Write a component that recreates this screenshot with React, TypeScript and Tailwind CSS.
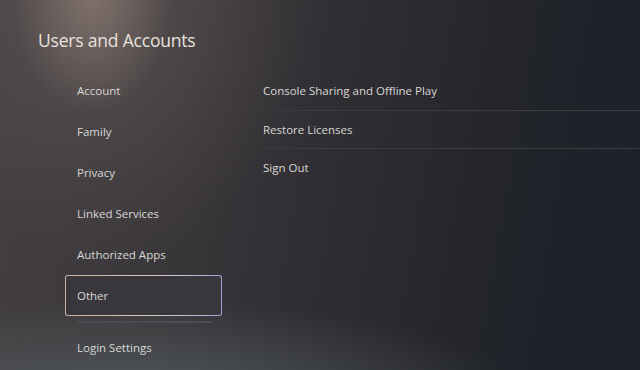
import React from 'react';

const menu = ['Account', 'Family', 'Privacy', 'Linked Services', 'Authorized Apps'];
const options = ['Console Sharing and Offline Play', 'Restore Licenses', 'Sign Out'];

const App: React.FC = () => {
  return (
    <div
      className="relative w-[640px] h-[370px] overflow-hidden text-[#d8d8d8] bg-[radial-gradient(ellipse_80px_120px_at_92px_-5px,rgba(150,132,124,0.65)_0%,transparent_100%),radial-gradient(ellipse_220px_270px_at_100px_-10px,rgba(112,100,96,0.5)_0%,transparent_100%),radial-gradient(ellipse_380px_95px_at_140px_395px,rgba(88,98,100,0.75)_0%,transparent_100%),linear-gradient(100deg,#433f42_0%,#3a373a_30%,#2d2c31_55%,#1f2229_85%,#1e2129_100%)]"
      style={{ fontFamily: '"Open Sans", "Noto Sans", sans-serif' }}
    >
      {/* Header */}
      <h1 className="pl-[38px] pt-[28px] text-[17.5px] leading-[24px] font-normal text-[#e6e2de] tracking-[-0.2px]">
        Users and Accounts
      </h1>

      <div className="flex pt-[18px]">
        {/* Left: category menu */}
        <div className="w-[157px] ml-[65px] flex flex-col">
          {menu.map((item) => (
            <div key={item} className="h-[41px] flex items-center pl-[12px] text-[11.5px]">
              {item}
            </div>
          ))}
          <div className="h-[41px] flex items-center pl-[11px] text-[11.5px] rounded-[3px] border border-transparent [background:linear-gradient(#39373b,#39373b)_padding-box,linear-gradient(90deg,#c9b09e_0%,#d6c6bc_45%,#c8c2d6_75%,#9ea2d2_100%)_border-box]">
            Other
          </div>
          <div className="mt-[5px] ml-[12px] w-[134px] h-[2px] bg-[#4a4e52]" />
          <div className="h-[41px] mt-[4px] flex items-center pl-[12px] text-[11.5px]">
            Login Settings
          </div>
        </div>

        {/* Right: options list */}
        <div className="ml-[41px] flex-1 flex flex-col pt-[2px]">
          <div className="h-[39px] flex items-center text-[11.5px] border-b border-[#3a3c42]">
            {options[0]}
          </div>
          <div className="h-[38px] flex items-center text-[11.5px] border-b border-[#3a3c42]">
            {options[1]}
          </div>
          <div className="h-[38px] flex items-center text-[11.5px]">{options[2]}</div>
        </div>
      </div>
    </div>
  );
};

export default App;
